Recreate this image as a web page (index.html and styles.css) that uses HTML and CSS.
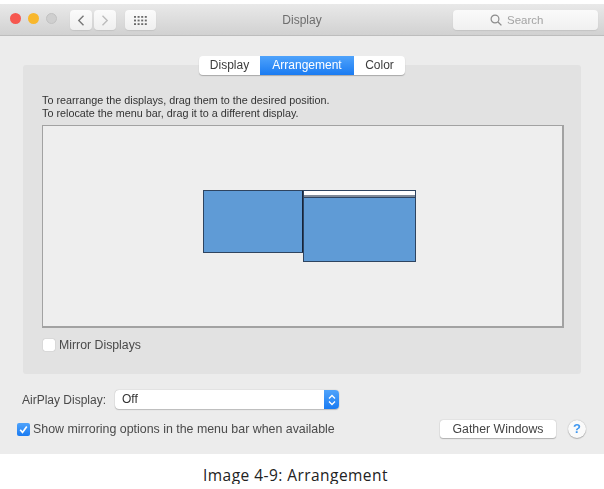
FILE: index.html
```html
<!DOCTYPE html>
<html lang="en">
<head>
<meta charset="utf-8">
<title>Display</title>
<link rel="stylesheet" href="styles.css">
</head>
<body>
<main class="window">
  <header class="titlebar">
    <div class="lights">
      <span class="light red"></span>
      <span class="light yellow"></span>
      <span class="light grey"></span>
    </div>
    <div class="nav">
      <span class="tool nav-btn">
        <svg width="8" height="11" viewBox="0 0 8 11"><path d="M6.500 .8 1.800 5.500l4.700 4.700" fill="none" stroke="#777" stroke-width="1.400"/></svg>
      </span>
      <span class="tool nav-btn">
        <svg width="8" height="11" viewBox="0 0 8 11"><path d="m1.500 .8 4.700 4.700-4.700 4.700" fill="none" stroke="#bcbcbc" stroke-width="1.400"/></svg>
      </span>
    </div>
    <span class="tool grid-btn">
      <svg width="13" height="9" viewBox="0 0 13 9" fill="#6a6a6a">
        <rect x="0" y="0" width="2" height="1.800"/><rect x="3.600" y="0" width="2" height="1.800"/><rect x="7.200" y="0" width="2" height="1.800"/><rect x="10.800" y="0" width="2" height="1.800"/>
        <rect x="0" y="3.600" width="2" height="1.800"/><rect x="3.600" y="3.600" width="2" height="1.800"/><rect x="7.200" y="3.600" width="2" height="1.800"/><rect x="10.800" y="3.600" width="2" height="1.800"/>
        <rect x="0" y="7.200" width="2" height="1.800"/><rect x="3.600" y="7.200" width="2" height="1.800"/><rect x="7.200" y="7.200" width="2" height="1.800"/><rect x="10.800" y="7.200" width="2" height="1.800"/>
      </svg>
    </span>
    <h1 class="title">Display</h1>
    <div class="search">
      <svg width="12" height="12" viewBox="0 0 12 12"><circle cx="5" cy="5" r="3.900" fill="none" stroke="#8c8c8c" stroke-width="1.200"/><path d="m8 8 3.400 3.400" stroke="#8c8c8c" stroke-width="1.300"/></svg>
      <span>Search</span>
    </div>
  </header>

  <section class="content">
    <div class="panel">
      <nav class="tabs">
        <span class="tab tab-display">Display</span>
        <span class="tab tab-active">Arrangement</span>
        <span class="tab tab-color">Color</span>
      </nav>
      <p class="hint">To rearrange the displays, drag them to the desired position.<br>To relocate the menu bar, drag it to a different display.</p>
      <div class="canvas">
        <div class="screen screen-left"></div>
        <div class="screen screen-right"><div class="menubar"></div></div>
      </div>
      <label class="check-row mirror">
        <span class="box"></span>
        <span>Mirror Displays</span>
      </label>
    </div>

    <div class="airplay">
      <span>AirPlay Display:</span>
      <div class="select">
        <span class="select-value">Off</span>
        <span class="stepper">
          <svg width="8" height="12" viewBox="0 0 8 12"><path d="m1 4.500 3-3 3 3M1 7.500l3 3 3-3" fill="none" stroke="#fff" stroke-width="1.300"/></svg>
        </span>
      </div>
    </div>

    <div class="footer-row">
      <label class="check-row">
        <span class="box box-on">
          <svg width="11" height="11" viewBox="0 0 11 11"><path d="m2.200 5.800 2.300 2.600 4.300-6" fill="none" stroke="#fff" stroke-width="1.700"/></svg>
        </span>
        <span class="mirror-option">Show mirroring options in the menu bar when available</span>
      </label>
      <span class="gather">Gather Windows</span>
      <span class="help">?</span>
    </div>
  </section>
</main>
<p class="caption">Image 4-9: Arrangement</p>
</body>
</html>
```
FILE: styles.css
```css
* {
  box-sizing: border-box;
}

html,
body {
  margin: 0;
  background: #fff;
}

body {
  padding-top: 4px;
  font-family: "Liberation Sans", Arial, sans-serif;
  color: #3c3c3c;
  overflow: hidden;
}

.window {
  width: 604px;
  height: 450px;
  background: #ececec;
  filter: blur(0.6px);
  display: flex;
  flex-direction: column;
}

/* Title bar */
.titlebar {
  position: relative;
  height: 32px;
  flex: none;
  display: flex;
  align-items: flex-start;
  padding-top: 6px;
  background: linear-gradient(#e9e9e9, #d1d1d1);
  border-bottom: 1px solid #bdbdbd;
}

.lights {
  display: flex;
  gap: 7px;
  margin: 3px 0 0 10px;
}

.light {
  width: 11px;
  height: 11px;
  border-radius: 50%;
}

.red { background: #f6574f; }
.yellow { background: #f8b72d; }
.grey { background: #cfcfcf; border: 1px solid #c2c2c2; }

.tool {
  display: flex;
  align-items: center;
  justify-content: center;
  height: 20px;
  background: linear-gradient(#fbfbfb, #efefef);
  border-radius: 4px;
  box-shadow: 0 1px 1px #c4c4c4;
}

.nav {
  display: flex;
  gap: 2px;
  margin-left: 13px;
}

.nav-btn { width: 22px; }

.grid-btn {
  width: 31px;
  margin-left: 9px;
}

.title {
  position: absolute;
  left: 0;
  right: 0;
  top: 9px;
  margin: 0;
  text-align: center;
  font-size: 12px;
  line-height: 14px;
  font-weight: 400;
  color: #6e6e6e;
  pointer-events: none;
}

.search {
  margin-left: auto;
  margin-right: 6px;
  width: 145px;
  height: 20px;
  display: flex;
  align-items: center;
  gap: 5px;
  padding-left: 37px;
  font-size: 11.500px;
  color: #a4a4a4;
  background: linear-gradient(#fafafa, #f0f0f0);
  border-radius: 4px;
  box-shadow: 0 1px 1px #c4c4c4;
}

/* Window body */
.content {
  flex: 1;
  padding: 29px 23px 0;
  font-size: 12.300px;
}

.panel {
  position: relative;
  width: 558px;
  height: 309px;
  padding: 29px 19px 0;
  background: #e2e2e2;
  border-radius: 3px;
}

.tabs {
  position: absolute;
  top: -9px;
  left: 176px;
  width: 206px;
  height: 19px;
  display: flex;
  background: #fff;
  border-radius: 4px;
  box-shadow: 0 1px 1px #a9a9a9;
  font-size: 12px;
  line-height: 19px;
  text-align: center;
}

.tab-display { width: 61px; }

.tab-active {
  width: 94px;
  color: #fff;
  background: linear-gradient(#4fa3fb, #1a7bf2);
}

.tab-color { width: 51px; }

.hint {
  margin: 0;
  font-size: 10.800px;
  line-height: 13px;
  color: #333;
}

.canvas {
  position: relative;
  width: 522px;
  height: 203px;
  margin-top: 5px;
  background: #eeeeee;
  border: 2px solid #a2a2a2;
  border-width: 1px 2px 2px 1px;
}

/* Display rectangles sit at their arranged spot on the canvas */
.screen {
  position: absolute;
  background: #5f9bd6;
  border: 1px solid #2e4460;
}

.screen-left {
  left: 160px;
  top: 64px;
  width: 101px;
  height: 63px;
  border-right-color: #14243c;
  border-right-width: 2px;
}

.screen-right {
  left: 260px;
  top: 64px;
  width: 113px;
  height: 72px;
}

.menubar {
  position: absolute;
  left: 0;
  right: 0;
  top: 0;
  height: 7px;
  background: linear-gradient(#fff 0 4px, #7f8a99 4px 6px, #2e4460 6px);
}

.check-row {
  display: flex;
  align-items: center;
  gap: 3px;
}

.mirror {
  margin: 10px 0 0 1px;
  gap: 4px;
  color: #4a4a4a;
}

.box {
  width: 12px;
  height: 12px;
  flex: none;
  background: #fff;
  border-radius: 2px;
  box-shadow: 0 0 1px #8e8e8e;
  display: flex;
  align-items: center;
  justify-content: center;
}

.box-on {
  width: 13px;
  height: 13px;
  background: linear-gradient(#4fa3fb, #1a7bf2);
  box-shadow: none;
}

.mirror-option {
  font-size: 12.400px;
}

.airplay {
  display: flex;
  align-items: center;
  gap: 9px;
  margin: 16px 0 0 -1px;
  font-size: 12px;
  color: #4a4a4a;
}

.select {
  width: 224px;
  height: 19px;
  display: flex;
  background: #fff;
  border-radius: 4px;
  box-shadow: 0 0 1px #999, 0 1px 1px #c0c0c0;
}

.select-value {
  flex: 1;
  padding-left: 7px;
  line-height: 19px;
  color: #333;
}

.stepper {
  width: 15px;
  display: flex;
  align-items: center;
  justify-content: center;
  border-radius: 0 4px 4px 0;
  background: linear-gradient(#4fa3fb, #1a7bf2);
}

.footer-row {
  display: flex;
  align-items: center;
  margin: 11px 0 0 -6px;
  color: #4a4a4a;
}

.gather {
  width: 116px;
  height: 18px;
  margin-left: auto;
  background: #fff;
  border-radius: 3px;
  box-shadow: 0 0 1px #999, 0 1px 1px #b5b5b5;
  text-align: center;
  line-height: 18px;
  color: #444;
}

.help {
  width: 18px;
  height: 18px;
  margin: 0 -5px 0 12px;
  border-radius: 50%;
  background: #fafafa;
  box-shadow: 0 0 1px #999, 0 1px 1px #b5b5b5;
  text-align: center;
  font-size: 13px;
  line-height: 18px;
  font-weight: 700;
  color: #3f97f0;
}

.caption {
  margin: 12px 0 0 203px;
  font-family: "Open Sans", sans-serif;
  font-size: 15.500px;
  letter-spacing: 0.45px;
  line-height: 18px;
  color: #222;
}
```
